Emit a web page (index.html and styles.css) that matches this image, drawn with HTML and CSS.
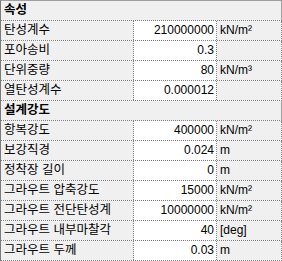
FILE: index.html
```html
<!DOCTYPE html>
<html lang="ko">
<head>
<meta charset="utf-8">
<link rel="stylesheet" href="styles.css">
</head>
<body>
<div class="grid">
  <div class="row head"><div class="cat">속성</div></div>
  <div class="row"><div class="name">탄성계수</div><div class="val">210000000</div><div class="unit">kN/m²</div></div>
  <div class="row"><div class="name">포아송비</div><div class="val">0.3</div><div class="unit"></div></div>
  <div class="row"><div class="name">단위중량</div><div class="val">80</div><div class="unit">kN/m³</div></div>
  <div class="row"><div class="name">열탄성계수</div><div class="val">0.000012</div><div class="unit"></div></div>
  <div class="row head"><div class="cat">설계강도</div></div>
  <div class="row"><div class="name">항복강도</div><div class="val">400000</div><div class="unit">kN/m²</div></div>
  <div class="row"><div class="name">보강직경</div><div class="val">0.024</div><div class="unit">m</div></div>
  <div class="row"><div class="name">정착장 길이</div><div class="val">0</div><div class="unit">m</div></div>
  <div class="row"><div class="name">그라우트 압축강도</div><div class="val">15000</div><div class="unit">kN/m²</div></div>
  <div class="row"><div class="name">그라우트 전단탄성계</div><div class="val">10000000</div><div class="unit">kN/m²</div></div>
  <div class="row"><div class="name">그라우트 내부마찰각</div><div class="val">40</div><div class="unit">[deg]</div></div>
  <div class="row"><div class="name">그라우트 두께</div><div class="val">0.03</div><div class="unit">m</div></div>
</div>
</body>
</html>
```
FILE: styles.css
```css
html, body {
  margin: 0;
  padding: 0;
  background: #ffffff;
}
body {
  font-family: "Liberation Sans", "Noto Sans CJK KR", sans-serif;
  font-size: 12px;
  color: #000000;
}
.grid {
  width: 281px;
  border-left: 1px solid #7a7a7a;
  border-top: 1px solid #a0a0a0;
}
.row {
  display: grid;
  grid-template-columns: 133px 83px 64px;
  height: 19px;
  border-bottom: 1px dotted #808080;
  border-right: 1px dotted #808080;
  line-height: 19px;
  white-space: nowrap;
}
.row.head {
  grid-template-columns: 1fr;
  background: #f0f0f0;
  border-right: 1px solid #a0a0a0;
}
.cat {
  font-weight: bold;
  font-size: 12.5px;
  padding-left: 3px;
}
.name {
  background: #f0f0f0;
  border-right: 1px dotted #808080;
  padding-left: 3px;
  font-size: 12.5px;
  overflow: hidden;
}
.val {
  background: #ffffff;
  border-right: 1px dotted #808080;
  text-align: right;
  padding-right: 2px;
  overflow: hidden;
}
.unit {
  background: #f0f0f0;
  padding-left: 3px;
  overflow: hidden;
}
```
